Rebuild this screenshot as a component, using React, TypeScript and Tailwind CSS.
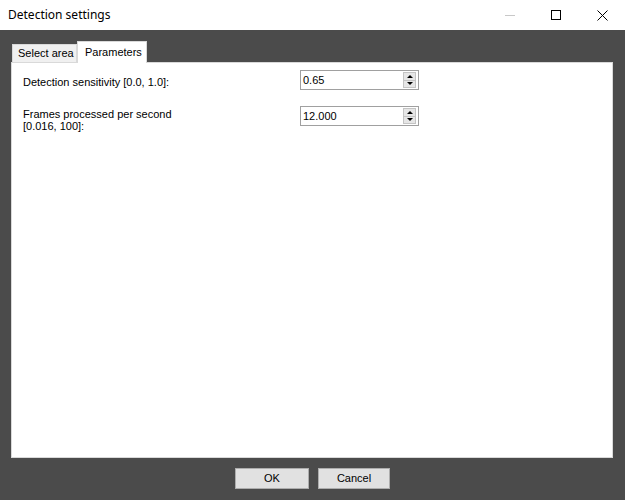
import React from 'react'

function Spin({ value }: { value: string }) {
  return (
    <div className="flex h-[20px] w-[119px] border border-[#a0a0a0] bg-white">
      <div className="flex flex-1 items-center pl-[2px] text-[11px] text-black">{value}</div>
      <div className="my-[1px] mr-[2px] flex w-[13px] flex-col border border-[#c4c4c4] bg-[#e6e6e6]">
        <div className="flex flex-1 items-center justify-center border-b border-[#c4c4c4]">
          <svg width="6" height="3" viewBox="0 0 6 3"><path d="M3 0L6 3H0z" fill="#000" /></svg>
        </div>
        <div className="flex flex-1 items-center justify-center">
          <svg width="6" height="3" viewBox="0 0 6 3"><path d="M0 0h6L3 3z" fill="#000" /></svg>
        </div>
      </div>
    </div>
  )
}

export default function App() {
  return (
    <div
      className="flex h-[500px] w-[625px] flex-col overflow-hidden bg-[#4b4b4b]"
      style={{ fontFamily: '"Liberation Sans", Arial, sans-serif' }}
    >
      {/* title bar */}
      <div className="flex h-[30px] items-center bg-white">
        <div
          className="flex-1 pl-[8px] text-[12px] text-black"
          style={{ fontFamily: '"Noto Sans", "Open Sans", sans-serif' }}
        >
          Detection settings
        </div>
        <div className="flex h-full">
          <div className="flex w-[46px] items-center justify-center">
            <div className="h-px w-[10px] bg-[#c8c8c8]" />
          </div>
          <div className="flex w-[46px] items-center justify-center">
            <div className="h-[10px] w-[10px] border border-black" />
          </div>
          <div className="flex w-[46px] items-center justify-center">
            <svg width="11" height="11" viewBox="0 0 11 11">
              <path d="M0.5 0.5L10.5 10.5M10.5 0.5L0.5 10.5" stroke="#000" strokeWidth="1" />
            </svg>
          </div>
        </div>
      </div>

      <div className="flex flex-1 flex-col px-[11px] pt-[11px]">
        {/* tabs */}
        <div className="flex h-[21px] items-end pl-[1px]">
          <div className="flex h-[18px] w-[65px] items-center border border-b-0 border-[#d9d9d9] bg-[#f0f0f0] pl-[5px] text-[11px] text-black">
            Select area
          </div>
          <div className="relative z-10 -mb-px flex h-[22px] w-[70px] items-start border border-b-0 border-[#d9d9d9] bg-white pl-[7px] pt-[2px] text-[11px] text-black">
            Parameters
          </div>
        </div>

        {/* tab page */}
        <div className="flex h-[396px] w-[602px] flex-col gap-[16px] border border-[#d9d9d9] bg-white pl-[11px] pt-[7px]">
          <div className="flex items-start">
            <div className="w-[277px] pt-[6px] text-[11px] leading-[13px] text-black">
              Detection sensitivity [0.0, 1.0]:
            </div>
            <Spin value="0.65" />
          </div>
          <div className="flex items-start">
            <div className="w-[277px] pt-[2px] text-[11px] leading-[12px] text-black">
              Frames processed per second
              <br />
              [0.016, 100]:
            </div>
            <Spin value="12.000" />
          </div>
        </div>

        {/* buttons */}
        <div className="flex justify-center gap-[9px] pt-[10px]">
          <button className="h-[21px] w-[74px] border border-[#adadad] bg-[#e1e1e1] text-[11px] text-black">
            OK
          </button>
          <button className="h-[21px] w-[72px] border border-[#adadad] bg-[#e1e1e1] text-[11px] text-black">
            Cancel
          </button>
        </div>
      </div>
    </div>
  )
}
